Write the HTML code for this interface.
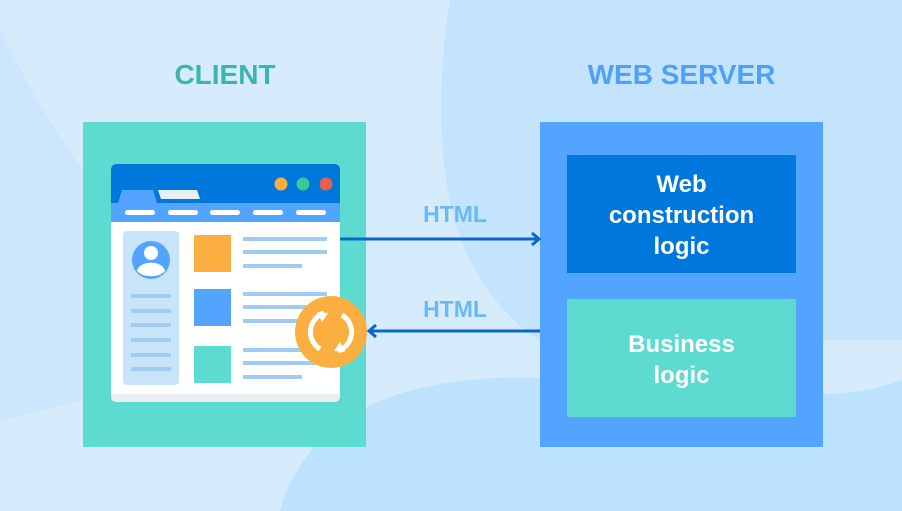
<!DOCTYPE html>
<html><head><meta charset="utf-8"><style>
*{margin:0;padding:0;box-sizing:border-box}
body{width:902px;height:511px;overflow:hidden;background:#d6ecfc;position:relative;font-family:"Liberation Sans",sans-serif}
.a{position:absolute}
.t{font-weight:bold;text-align:center;color:#fff}
</style></head><body>
<svg class="a" style="left:0;top:0" width="902" height="511">
<path d="M450 0 C440 60 430 180 470 260 C490 300 520 330 540 340 L902 340 L902 0 Z" fill="#c4e4fd"/>
<path d="M280 511 C300 440 360 390 470 380 C600 365 800 420 902 380 L902 511 Z" fill="#bde2fd"/>
<path d="M0 30 C30 90 60 140 83 170 L83 400 L0 420 Z" fill="#c8e5fd" opacity=".8"/>
</svg>
<div class="a t" style="left:100px;top:59px;width:250px;font-size:28px;color:#3cb5b0">CLIENT</div>
<div class="a t" style="left:540px;top:59px;width:283px;font-size:28px;color:#4ea0f8">WEB SERVER</div>

<div class="a" style="left:83px;top:122px;width:283px;height:325px;background:#5edbd0"></div>
<div class="a" style="left:540px;top:122px;width:283px;height:325px;background:#52a4ff"></div>
<div class="a t" style="left:567px;top:155px;width:229px;height:118px;background:#0077dd;font-size:24px;line-height:31px;padding-top:14px">Web<br>construction<br>logic</div>
<div class="a t" style="left:567px;top:299px;width:229px;height:118px;background:#5edbd0;font-size:24px;line-height:31px;padding-top:30px">Business<br>logic</div>

<div class="a t" style="left:405px;top:201px;width:100px;font-size:23px;color:#6cb8f4">HTML</div>
<div class="a t" style="left:405px;top:296px;width:100px;font-size:23px;color:#6cb8f4">HTML</div>

<!-- browser -->
<div class="a" style="left:111px;top:164px;width:229px;height:238px;background:#e8eef2;border-radius:5px"></div>
<div class="a" style="left:111px;top:164px;width:229px;height:230px;background:#fff;border-radius:5px 5px 0 0"></div>
<div class="a" style="left:111px;top:164px;width:229px;height:40px;background:#0077db;border-radius:5px 5px 0 0"></div>
<svg class="a" style="left:111px;top:164px" width="229" height="60">
<path d="M7 39 L11 26 L42 26 L46 39 Z" fill="#52a4ff"/>
<path d="M47 26 L86 26 L89 35 L50 35 Z" fill="#e8eef2"/>
<circle cx="170" cy="20" r="6.5" fill="#fbaf41"/>
<circle cx="192" cy="20" r="6.5" fill="#3cc79a"/>
<circle cx="215" cy="20" r="6.5" fill="#e8604c"/>
</svg>
<div class="a" style="left:111px;top:203px;width:229px;height:19px;background:#52a4ff"></div>
<div class="a" style="left:125px;top:210px;width:30px;height:5px;background:#fff;border-radius:3px"></div>
<div class="a" style="left:168px;top:210px;width:30px;height:5px;background:#fff;border-radius:3px"></div>
<div class="a" style="left:210px;top:210px;width:30px;height:5px;background:#fff;border-radius:3px"></div>
<div class="a" style="left:253px;top:210px;width:30px;height:5px;background:#fff;border-radius:3px"></div>
<div class="a" style="left:296px;top:210px;width:30px;height:5px;background:#fff;border-radius:3px"></div>
<div class="a" style="left:123px;top:231px;width:56px;height:154px;background:#c8e4f8;border-radius:4px"></div>
<svg class="a" style="left:131px;top:240px" width="40" height="40">
<circle cx="20" cy="20" r="19" fill="#52a4ff"/>
<circle cx="20" cy="13" r="7" fill="#fff"/>
<path d="M6 31 C8 20 32 20 34 31 C28 38 12 38 6 31Z" fill="#fff"/>
</svg>
<div class="a" style="left:131px;top:294px;width:40px;height:4px;background:#a0ccf4;box-shadow:0 15px #a0ccf4,0 29px #a0ccf4,0 44px #a0ccf4,0 59px #a0ccf4,0 73px #a0ccf4"></div>
<div class="a" style="left:194px;top:235px;width:37px;height:37px;background:#fbaf41"></div>
<div class="a" style="left:194px;top:289px;width:37px;height:37px;background:#52a4ff"></div>
<div class="a" style="left:194px;top:346px;width:37px;height:37px;background:#5edbd0"></div>
<div class="a" style="left:243px;top:237px;width:84px;height:4px;background:#a0ccf4;box-shadow:0 13px #a0ccf4"></div>
<div class="a" style="left:243px;top:264px;width:59px;height:4px;background:#a0ccf4"></div>
<div class="a" style="left:243px;top:292px;width:84px;height:4px;background:#a0ccf4;box-shadow:0 13px #a0ccf4"></div>
<div class="a" style="left:243px;top:319px;width:59px;height:4px;background:#a0ccf4"></div>
<div class="a" style="left:243px;top:348px;width:84px;height:4px;background:#a0ccf4;box-shadow:0 13px #a0ccf4"></div>
<div class="a" style="left:243px;top:375px;width:59px;height:4px;background:#a0ccf4"></div>

<svg class="a" style="left:0;top:0" width="902" height="511">
<line x1="340" y1="239" x2="538" y2="239" stroke="#0a66c8" stroke-width="3"/>
<path d="M532 233 L539 239 L532 245" fill="none" stroke="#0a66c8" stroke-width="3"/>
<line x1="369" y1="331" x2="540" y2="331" stroke="#0a66c8" stroke-width="3"/>
<path d="M376 325 L369 331 L376 337" fill="none" stroke="#0a66c8" stroke-width="3"/>
<circle cx="331" cy="332" r="36" fill="#fbaf41"/>
<path d="M324 313 A20 20 0 0 0 320 349" fill="none" stroke="#fff" stroke-width="5"/>
<path d="M338 351 A20 20 0 0 0 342 315" fill="none" stroke="#fff" stroke-width="5"/>
<path d="M317 312 L328 313 L322 322 Z" fill="#fff"/>
<path d="M345 352 L334 351 L340 342 Z" fill="#fff"/>
</svg>
</body></html>
